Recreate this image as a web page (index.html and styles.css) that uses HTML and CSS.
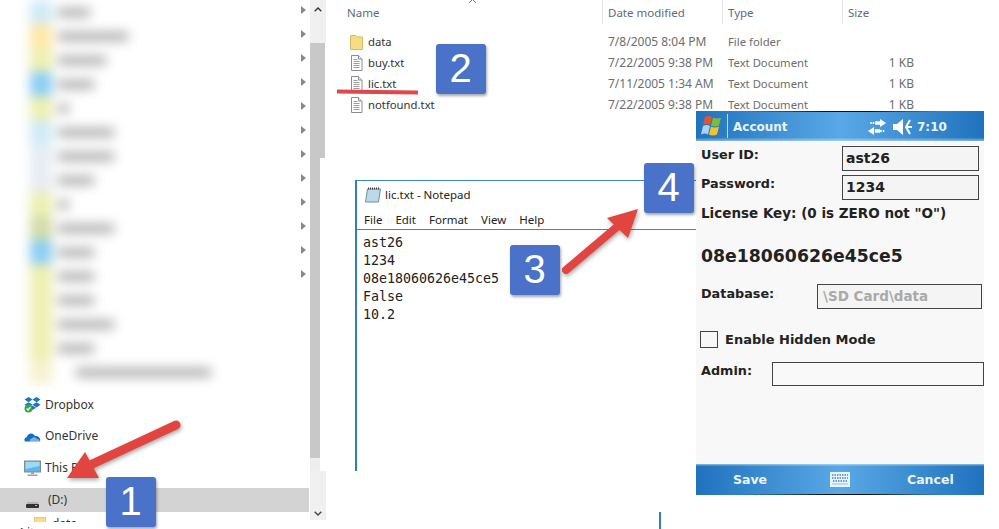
FILE: index.html
```html
<!DOCTYPE html>
<html lang="en">
<head>
<meta charset="utf-8">
<title>lic.txt walkthrough</title>
<link rel="stylesheet" href="styles.css">
</head>
<body>
<svg class="defs" width="0" height="0" aria-hidden="true">
  <symbol id="doc" viewBox="0 0 13 16">
    <path d="M1.500.5h7l3.500 3.500v11.500h-10.500z" fill="#fff" stroke="#8c8c8c"/>
    <path d="M8.500.5v3.500h3.500" fill="#eee" stroke="#8c8c8c"/>
    <path d="M3.500 4.500h4M3.500 6.500h6M3.500 8.500h6M3.500 10.500h6M3.500 12.500h6" stroke="#9a9a9a"/>
  </symbol>
</svg>
<main class="canvas">

  <section class="explorer">
    <div class="nav">
      <div class="nav-top">
        <div class="blur-list">
          <div class="blur-row"><i class="bi c-sky"></i><b class="w32"></b></div>
          <div class="blur-row"><i class="bi c-sun"></i><b class="w70"></b></div>
          <div class="blur-row"><i class="bi c-lime"></i><b class="w48"></b></div>
          <div class="blur-row"><i class="bi c-blue"></i><b class="w36"></b></div>
          <div class="blur-row"><i class="bi c-lime"></i><b class="w10"></b></div>
          <div class="blur-row"><i class="bi c-sky"></i><b class="w56"></b></div>
          <div class="blur-row"><i class="bi c-mist"></i><b class="w56"></b></div>
          <div class="blur-row"><i class="bi c-mist"></i><b class="w36"></b></div>
          <div class="blur-row"><i class="bi c-lime"></i><b class="w10"></b></div>
          <div class="blur-row"><i class="bi c-olive"></i><b class="w56"></b></div>
          <div class="blur-row"><i class="bi c-blue"></i><b class="w36"></b></div>
          <div class="blur-row"><i class="bi c-lime"></i><b class="w36"></b></div>
          <div class="blur-row"><i class="bi c-lime"></i><b class="w36"></b></div>
          <div class="blur-row"><i class="bi c-lime"></i><b class="w56"></b></div>
          <div class="blur-row"><i class="bi c-lime"></i><b class="w36"></b></div>
          <div class="blur-row"><i class="bi c-pale"></i><b class="wlong"></b></div>
        </div>
        <div class="expanders">
          <i></i><i></i><i></i><i></i><i></i><i></i><i></i><i></i><i></i><i></i><i></i><i></i>
        </div>
      </div>
      <div class="nav-item">
        <svg class="nav-icon" width="17" height="17" viewBox="0 0 17 17">
          <path d="M4.500 1l4 2.600-4 2.600-4-2.600zM12.500 1l4 2.600-4 2.600-4-2.600zM4.500 6.200l4 2.600-4 2.600-4-2.600zM12.500 6.200l4 2.600-4 2.600-4-2.600zM8.500 9.500l3.500 2.300-3.500 2.200-3.500-2.200z" fill="#1b76c9"/>
          <circle cx="4.500" cy="12.500" r="4" fill="#3aa648"/>
          <path d="M2.700 12.500l1.400 1.500 2.400-2.800" fill="none" stroke="#fff" stroke-width="1.200"/>
        </svg>
        <span>Dropbox</span>
      </div>
      <div class="nav-item">
        <svg class="nav-icon" width="17" height="17" viewBox="0 0 17 17">
          <path d="M1 13.500c-1.300-1.700-.3-4 1.800-4.200.6-2.600 3-4.300 5.400-3.500 1.300.4 2.200 1.200 2.700 2.300 2.500-.6 5 1.100 5.300 3.500.1.900-.2 1.900-.7 1.900z" fill="#0f6fc6"/>
          <path d="M6 13.500c-.8-1.500.2-3.100 1.800-3 1-1.700 4-1.800 5 .5 1.500-.2 3 .9 3 2.500z" fill="#fff" opacity=".45"/>
        </svg>
        <span>OneDrive</span>
      </div>
      <div class="nav-item">
        <svg class="nav-icon" width="17" height="17" viewBox="0 0 17 17">
          <rect x=".5" y="1" width="16" height="11" fill="#5db7ea" stroke="#7f8a94"/>
          <path d="M1.500 2h14v4l-14 3z" fill="#9adcf8"/>
          <path d="M7 12h3v2H7zM3.500 14.500h10V16h-10z" fill="#9aa3aa"/>
        </svg>
        <span>This PC</span>
      </div>
      <div class="nav-item drive">
        <svg class="drive-icon" width="13" height="6" viewBox="0 0 13 6">
          <rect x="1" y="0" width="11" height="2" fill="#b5b5b5"/>
          <rect y="2" width="13" height="4" rx="1" fill="#333"/>
          <rect x="9" y="3" width="2" height="1" fill="#9fd69f"/>
        </svg>
        <span>(D:)</span>
      </div>
      <div class="nav-child">
        <svg width="12" height="12" viewBox="0 0 12 12"><rect width="12" height="12" fill="#f7dc83" stroke="#d9b95a"/></svg>
        <span>data</span>
      </div>
      <div class="status">4 items</div>
    </div>
    <div class="scrollbar">
      <div class="sb-up"><svg width="8" height="5" viewBox="0 0 8 5"><path d="M.7 4.300L4 1l3.300 3.300" fill="none" stroke="#333" stroke-width="1.400"/></svg></div>
      <div class="sb-thumb-wide"></div>
      <div class="sb-thumb-narrow"></div>
      <div class="sb-track"></div>
      <div class="sb-down"><svg width="8" height="5" viewBox="0 0 8 5"><path d="M.7.7L4 4l3.300-3.300" fill="none" stroke="#444" stroke-width="1.400"/></svg></div>
    </div>
  </section>

  <section class="files">
    <div class="file-head">
      <div class="col col-name">Name
        <svg class="sort" width="9" height="5" viewBox="0 0 9 5"><path d="M1 4l3.500-3.500L8 4" fill="none" stroke="#777"/></svg>
      </div>
      <div class="col">Date modified</div>
      <div class="col">Type</div>
      <div class="col">Size</div>
    </div>
    <div class="file-row">
      <div class="fname">
        <svg class="ficon" width="13" height="16" viewBox="0 0 13 16"><path d="M.5 1.500h5l1.500 1.500h5.500v12.500H.5z" fill="#f8dc85" stroke="#d8ba62"/></svg>
        <span>data</span>
      </div>
      <div class="meta">7/8/2005 8:04 PM</div><div class="meta kind">File folder</div><div class="meta size"></div>
    </div>
    <div class="file-row">
      <div class="fname"><svg class="ficon" width="13" height="16"><use href="#doc"/></svg><span>buy.txt</span></div>
      <div class="meta">7/22/2005 9:38 PM</div><div class="meta kind">Text Document</div><div class="meta size">1 KB</div>
    </div>
    <div class="file-row">
      <div class="fname"><svg class="ficon" width="13" height="16"><use href="#doc"/></svg><span>lic.txt</span></div>
      <div class="meta">7/11/2005 1:34 AM</div><div class="meta kind">Text Document</div><div class="meta size">1 KB</div>
    </div>
    <div class="file-row">
      <div class="fname"><svg class="ficon" width="13" height="16"><use href="#doc"/></svg><span>notfound.txt</span></div>
      <div class="meta">7/22/2005 9:38 PM</div><div class="meta kind">Text Document</div><div class="meta size">1 KB</div>
    </div>
  </section>

  <section class="notepad">
    <div class="np-title">
      <svg width="16" height="16" viewBox="0 0 16 16">
        <path d="M2.500 2h13l-2 13H.5z" fill="#bcd9ea" stroke="#6d8ea3"/>
        <path d="M3 1.500h12" stroke="#444" stroke-width="2" stroke-dasharray="1 1"/>
      </svg>
      <span>lic.txt - Notepad</span>
    </div>
    <nav class="np-menu"><span>File</span><span>Edit</span><span>Format</span><span>View</span><span>Help</span></nav>
    <pre class="np-text">ast26
1234
08e18060626e45ce5
False
10.2</pre>
  </section>
  <div class="stray-line"></div>

  <section class="phone">
    <header class="ph-top">
      <svg class="flag" width="24" height="24" viewBox="0 0 24 24">
        <path d="M5 3c3-1.500 5-1 7 0l-2 8c-2-1-4-1.500-7 0z" fill="#e8522a"/>
        <path d="M13 3.500c2.500 1.300 5 1.300 8 0l-2 8c-3 1.300-5.500 1.300-8 0z" fill="#7dbb3c"/>
        <path d="M3 12c3-1.500 5-1 7 0l-2 8.500c-2-1-4-1.500-7 0z" fill="#a8d4f4"/>
        <path d="M11 12.500c2.500 1.300 5 1.300 8 0l-2 8c-3 1.300-5.500 1.300-8 0z" fill="#f6c22c"/>
      </svg>
      <span class="ph-sep"></span>
      <span class="ph-app">Account</span>
      <svg class="ph-conn" width="18" height="16" viewBox="0 0 18 16">
        <path d="M12 0l6 4-6 4zM6 8l-6 4 6 4z" fill="#fff"/>
        <path d="M3 3v2M5.500 3v2M8 3h4v2H8zM7.500 11h4v2h-4zM13 11v2M15.500 11v2" stroke="#fff" stroke-width="1.500" fill="#fff"/>
      </svg>
      <svg class="ph-vol" width="21" height="18" viewBox="0 0 21 18">
        <path d="M0 6h4l6-5v16l-6-5H0z" fill="#fff"/>
        <path d="M17 2l-4 7 4 7M14 9h5" fill="none" stroke="#fff" stroke-width="2"/>
      </svg>
      <span class="ph-time">7:10</span>
    </header>
    <div class="ph-body">
      <div class="ph-row r-user"><label>User ID:</label><div class="ph-input in-cred">ast26</div></div>
      <div class="ph-row r-pass"><label>Password:</label><div class="ph-input in-cred">1234</div></div>
      <p class="ph-hint">License Key: (0 is ZERO not "O")</p>
      <p class="ph-key">08e18060626e45ce5</p>
      <div class="ph-row r-db"><label>Database:</label><div class="ph-input in-db">\SD Card\data</div></div>
      <div class="ph-check"><span class="box"></span><span>Enable Hidden Mode</span></div>
      <div class="ph-row r-admin"><label>Admin:</label><div class="ph-input in-admin"></div></div>
    </div>
    <footer class="ph-foot">
      <span class="soft-left">Save</span>
      <svg class="kbd" width="20" height="15" viewBox="0 0 20 15">
        <rect width="20" height="15" fill="#eaf4fc"/>
        <path d="M2 3h16M2 6h16M3 9h14" stroke="#4a86bd" stroke-width="1.500" stroke-dasharray="1.500 1"/>
        <path d="M2 12h16" stroke="#9dbfdc"/>
      </svg>
      <span class="soft-right">Cancel</span>
    </footer>
  </section>

  <div class="underline"></div>

  <svg class="arrows" width="999" height="529" viewBox="0 0 999 529">
    <g class="arrow">
      <path d="M176 425L88 466" stroke="#e2453f" stroke-width="9" stroke-linecap="round" fill="none"/>
      <path d="M67 478L85 452 99 478z" fill="#e2453f"/>
    </g>
    <g class="arrow">
      <path d="M566 270L618 226" stroke="#e2453f" stroke-width="8" stroke-linecap="round" fill="none"/>
      <path d="M638 209L607 218 628 238z" fill="#e2453f"/>
    </g>
  </svg>

  <div class="badge b1">1</div>
  <div class="badge b2">2</div>
  <div class="badge b3">3</div>
  <div class="badge b4">4</div>
</main>
</body>
</html>
```

FILE: styles.css
```css
* { box-sizing: border-box; }
html, body { margin: 0; padding: 0; background: #fff; }
body { overflow: hidden; }
.defs { position: absolute; }
.canvas {
  position: relative;
  width: 999px;
  height: 529px;
  overflow: hidden;
  background: #fff;
  font-family: "Noto Sans", "Open Sans", sans-serif;
  font-size: 12px;
  color: #333;
}

/* explorer navigation pane */
.explorer {
  position: absolute;
  left: 0;
  top: 0;
  width: 326px;
  height: 529px;
  display: flex;
  overflow: hidden;
}
.nav { width: 310px; display: flex; flex-direction: column; }
.nav-top { height: 388px; display: flex; overflow: hidden; flex: none; }
.blur-list { width: 301px; filter: blur(6px); opacity: .75; }
.blur-row { height: 24px; display: flex; align-items: center; gap: 6px; padding-left: 30px; }
.bi { width: 22px; height: 24px; flex: none; }
.blur-row b { height: 9px; background: #909090; display: block; }
.c-sky { background: #bfe3f4; }
.c-sun { background: #ffe08a; }
.c-lime { background: #e8ea96; }
.c-blue { background: #62bcf2; }
.c-mist { background: #dfe6ee; }
.c-olive { background: #c4d08c; }
.c-pale { background: #f4ecc0; }
.w10 { width: 11px; }
.w32 { width: 32px; }
.w36 { width: 36px; }
.w48 { width: 48px; }
.w56 { width: 56px; }
.w70 { width: 70px; }
.wlong { width: 135px; margin-left: 18px; }
.expanders { width: 9px; display: flex; flex-direction: column; }
.expanders i {
  height: 24px;
  display: flex;
  align-items: center;
}
.expanders i::before {
  content: "";
  border-left: 5px solid #8a8a8a;
  border-top: 4px solid transparent;
  border-bottom: 4px solid transparent;
  margin-top: -4px;
}
.nav-item {
  height: 32px;
  flex: none;
  display: flex;
  align-items: center;
  gap: 4px;
  padding-left: 24px;
  color: #333;
}
.nav-item + .nav-item span { margin-top: -2px; }
.drive {
  height: 24px;
  margin-top: 4px;
  background: #d3d3d3;
  width: 309px;
  padding-left: 26px;
  gap: 9px;
}
.drive-icon { margin-top: 10px; }
.nav-child {
  height: 5px;
  margin-top: 5px;
  display: flex;
  gap: 6px;
  padding-left: 34px;
  flex: none;
  overflow: hidden;
}
.nav-child span { display: block; height: 5px; line-height: 14px; overflow: hidden; }
.status { padding-left: 17px; line-height: 14px; margin-top: 4px; }

.scrollbar { width: 16px; display: flex; flex-direction: column; flex: none; }
.sb-up { height: 43px; background: #f0f0f0; display: flex; justify-content: center; padding-top: 7px; }
.sb-thumb-wide { height: 115px; background: #c8c8c8; width: 15px; }
.sb-thumb-narrow { height: 300px; background: #c8c8c8; width: 10px; }
.sb-track { height: 13px; background: #eeeeee; width: 10px; }
.sb-down { height: 49px; background: #f0f0f0; display: flex; justify-content: center; padding-top: 40px; }

/* file list */
.files { position: absolute; left: 330px; top: 0; width: 592px; color: #6d6d6d; }
.file-head, .file-row { display: grid; grid-template-columns: 272px 120px 120px 80px; }
.file-head { height: 24px; margin-bottom: 7px; font-size: 11.500px; }
.col { border-left: 1px solid #e5e5e5; padding-left: 5px; padding-top: 4px; line-height: 18px; color: #5f6b78; }
.col-name { border-left: 0; padding-left: 17px; position: relative; }
.sort { position: absolute; left: 138px; top: -1px; }
.file-row { height: 21px; align-items: center; line-height: 21px; }
.fname { display: flex; align-items: center; gap: 5px; padding-left: 20px; color: #333; font-size: 11.300px; }
.meta { padding-left: 6px; }
.kind { font-size: 11.300px; }
.size { text-align: right; padding-right: 8px; }

/* notepad */
.notepad {
  position: absolute;
  left: 355px;
  top: 180px;
  width: 341px;
  height: 291px;
  background: #fff;
  border-top: 1px solid #3b8ac4;
  border-left: 2px solid #2f7fbc;
  color: #222;
  font-size: 11.500px;
}
.np-title { height: 29px; display: flex; align-items: center; gap: 4px; padding-left: 8px; padding-bottom: 2px; }
.np-menu { height: 20px; display: flex; gap: 13px; padding-left: 7px; border-bottom: 1px solid #3b8ac4; line-height: 19px; }
.np-text {
  margin: 0;
  padding: 4px 0 0 6px;
  font-family: "DejaVu Sans Mono", "Liberation Mono", monospace;
  font-size: 13.300px;
  line-height: 18px;
  color: #222;
}
.stray-line { position: absolute; left: 659px; top: 512px; width: 2px; height: 17px; background: #2f7fbc; }

/* pocket pc */
.phone {
  position: absolute;
  left: 696px;
  top: 111px;
  width: 288px;
  height: 384px;
  display: flex;
  flex-direction: column;
  background: #f8f8f8;
  font-family: "DejaVu Sans", "Noto Sans", sans-serif;
  font-weight: 700;
  color: #222;
}
.ph-top {
  height: 30px;
  flex: none;
  display: flex;
  align-items: center;
  padding-left: 4px;
  padding-top: 1px;
  color: #eaf4fc;
  background:
    linear-gradient(90deg, transparent 15%, #111 45%, #111 60%, transparent 85%) top / 100% 1px no-repeat,
    linear-gradient(180deg, transparent 88%, rgba(255, 255, 255, .45) 100%),
    linear-gradient(90deg, #1f72bd 0%, #5aa8e6 50%, #1f72bd 100%);
  font-size: 12px;
}
.flag { margin-top: -1px; }
.ph-sep { width: 1px; height: 24px; background: #bcdcf4; margin-left: 3px; margin-top: -1px; }
.ph-app { margin-left: 5px; width: 135px; }
.ph-conn { flex: none; }
.ph-vol { flex: none; margin-left: 7px; }
.ph-time { margin-left: 3px; font-size: 12px; }
.ph-body { flex: 1; min-height: 0; padding-left: 5px; font-size: 12.800px; }
.ph-row { display: flex; align-items: flex-start; }
.ph-input {
  height: 25px;
  border: 1.500px solid #444;
  background: #f4f4f4;
  font-size: 14px;
  line-height: 22px;
  padding-left: 3px;
  flex: none;
}
.r-user { margin-top: 5px; height: 25px; }
.r-pass { margin-top: 4px; height: 25px; }
.ph-row label { display: block; width: 141px; line-height: 17px; }
.in-cred { width: 137px; }
.ph-hint { margin: 4px 0 0; line-height: 18px; font-size: 13.500px; }
.ph-key { margin: 22px 0 0; font-size: 17.300px; line-height: 24px; }
.r-db { margin-top: 16px; }
.r-db label { width: 116px; margin-top: 1px; }
.in-db { width: 165px; color: #a9a9a9; font-size: 13.500px; padding-left: 5px; }
.ph-check { display: flex; align-items: center; gap: 7px; margin-top: 22px; margin-left: -1px; font-size: 13px; line-height: 17px; height: 17px; }
.box { width: 18px; height: 17px; border: 1.500px solid #444; background: #f8f8f8; }
.r-admin { margin-top: 14px; }
.r-admin label { width: 71px; }
.in-admin { width: 212px; height: 24px; background: #f9f9f9; }
.ph-foot {
  height: 31px;
  flex: none;
  display: flex;
  align-items: center;
  color: #eaf4fc;
  background:
    linear-gradient(90deg, transparent 15%, #111 45%, #111 60%, transparent 85%) bottom / 100% 1px no-repeat,
    linear-gradient(180deg, rgba(255, 255, 255, .5) 0, transparent 8%),
    linear-gradient(90deg, #1f72bd 0%, #5aa8e6 50%, #1f72bd 100%);
  font-size: 12.500px;
}
.soft-left { margin-left: 37px; width: 97px; }
.kbd { flex: none; }
.soft-right { margin-left: 57px; }

/* annotations laid over the screenshots */
.underline { position: absolute; left: 337px; top: 90px; width: 81px; height: 4px; background: #df4749; transform: rotate(.6deg); }
.arrows { position: absolute; left: 0; top: 0; pointer-events: none; }
.arrow { filter: drop-shadow(1px 2px 2px rgba(0, 0, 0, .35)); }
.badge {
  position: absolute;
  width: 50px;
  height: 50px;
  border-radius: 3px;
  background: #4a72c8;
  color: #fff;
  font-family: "Liberation Sans", sans-serif;
  font-size: 40px;
  line-height: 49px;
  text-align: center;
  text-indent: -1px;
  box-shadow: 1px 2px 3px rgba(0, 0, 0, .35);
}
.b1 { left: 106px; top: 477px; }
.b2 { left: 436px; top: 44px; }
.b3 { left: 510px; top: 245px; }
.b4 { left: 644px; top: 163px; }
```
